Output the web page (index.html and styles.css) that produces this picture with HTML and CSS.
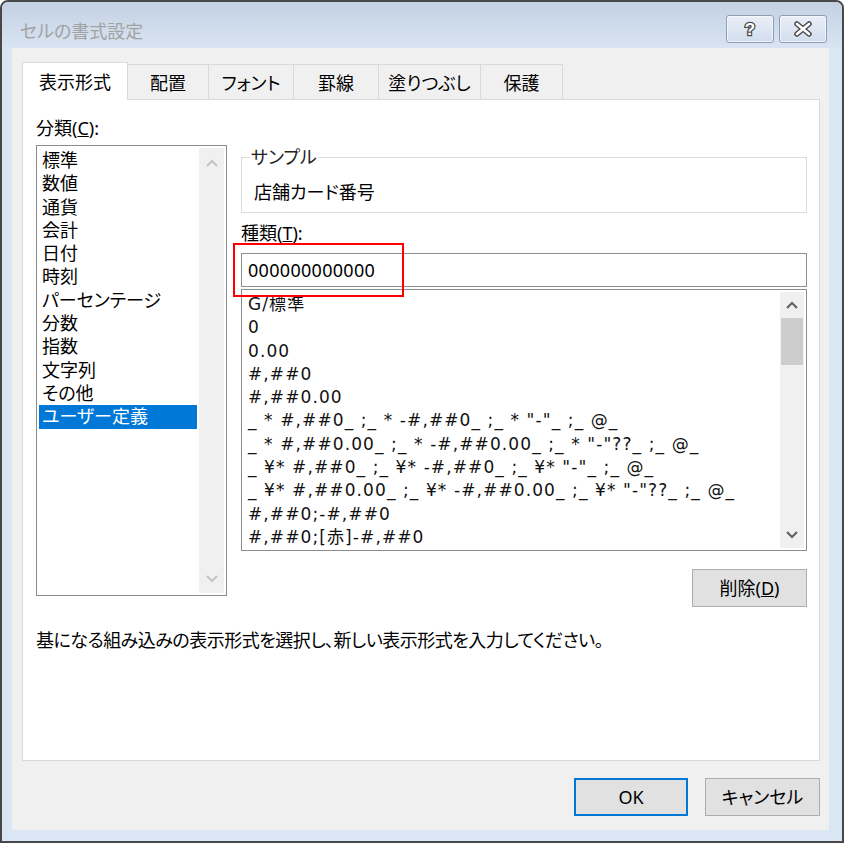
FILE: index.html
```html
<!DOCTYPE html>
<html lang="ja">
<head>
<meta charset="utf-8">
<title>セルの書式設定</title>
<link rel="stylesheet" href="styles.css">
</head>
<body>
<div class="window">
  <div class="titlebar">
    <div class="title">セルの書式設定</div>
    <div class="caption-buttons">
      <div class="cap-btn">
        <svg width="20" height="20" viewBox="0 0 20 20"><text x="10" y="16" text-anchor="middle" font-family="Liberation Sans, sans-serif" font-weight="bold" font-size="17" fill="#fff" stroke="#4a4a4a" stroke-width="2.6" paint-order="stroke">?</text></svg>
      </div>
      <div class="cap-btn">
        <svg width="20" height="16" viewBox="0 0 20 16"><path d="M4 3 L16 13 M16 3 L4 13" stroke="#4a4a4a" stroke-width="5.5" stroke-linecap="round"/><path d="M4 3 L16 13 M16 3 L4 13" stroke="#fff" stroke-width="2.6" stroke-linecap="round"/></svg>
      </div>
    </div>
  </div>
  <div class="client">
    <div class="tabs">
      <div class="tab active tab-w1">表示形式</div>
      <div class="tab tab-w2">配置</div>
      <div class="tab tab-w3">フォント</div>
      <div class="tab tab-w3">罫線</div>
      <div class="tab tab-w4">塗りつぶし</div>
      <div class="tab tab-w5">保護</div>
    </div>
    <div class="panel">
      <div class="panel-main">
        <div class="col-left">
          <div class="label">分類(<u>C</u>):</div>
          <div class="listbox cat-list">
            <div class="items">
              <div class="item">標準</div>
              <div class="item">数値</div>
              <div class="item">通貨</div>
              <div class="item">会計</div>
              <div class="item">日付</div>
              <div class="item">時刻</div>
              <div class="item">パーセンテージ</div>
              <div class="item">分数</div>
              <div class="item">指数</div>
              <div class="item">文字列</div>
              <div class="item">その他</div>
              <div class="item selected">ユーザー定義</div>
            </div>
            <div class="vscroll disabled">
              <div class="arrow arrow-cat"><svg width="12" height="8" viewBox="0 0 12 8"><path d="M1 7 L6 2 L11 7" fill="none" stroke="currentColor" stroke-width="2"/></svg></div>
              <div class="track"></div>
              <div class="arrow arrow-cat"><svg width="12" height="8" viewBox="0 0 12 8"><path d="M1 1 L6 6 L11 1" fill="none" stroke="currentColor" stroke-width="2"/></svg></div>
            </div>
          </div>
        </div>
        <div class="col-right">
          <fieldset class="group">
            <legend>サンプル</legend>
            <div class="sample">店舗カード番号</div>
          </fieldset>
          <div class="label kind-label">種類(<u>T</u>):</div>
          <div class="input-wrap">
            <div class="input">000000000000</div>
            <div class="mark"></div>
          </div>
          <div class="listbox fmt-list">
            <div class="items fmt-items">
              <div class="item">G/標準</div>
              <div class="item">0</div>
              <div class="item">0.00</div>
              <div class="item">#,##0</div>
              <div class="item">#,##0.00</div>
              <div class="item">_ * #,##0_ ;_ * -#,##0_ ;_ * "-"_ ;_ @_</div>
              <div class="item">_ * #,##0.00_ ;_ * -#,##0.00_ ;_ * "-"??_ ;_ @_</div>
              <div class="item">_ ¥* #,##0_ ;_ ¥* -#,##0_ ;_ ¥* "-"_ ;_ @_</div>
              <div class="item">_ ¥* #,##0.00_ ;_ ¥* -#,##0.00_ ;_ ¥* "-"??_ ;_ @_</div>
              <div class="item">#,##0;-#,##0</div>
              <div class="item">#,##0;[赤]-#,##0</div>
            </div>
            <div class="vscroll">
              <div class="arrow"><svg width="12" height="8" viewBox="0 0 12 8"><path d="M1 7 L6 2 L11 7" fill="none" stroke="currentColor" stroke-width="2"/></svg></div>
              <div class="thumb"></div>
              <div class="track"></div>
              <div class="arrow"><svg width="12" height="8" viewBox="0 0 12 8"><path d="M1 1 L6 6 L11 1" fill="none" stroke="currentColor" stroke-width="2"/></svg></div>
            </div>
          </div>
          <div class="btn-row">
            <button class="btn btn-del">削除(<u>D</u>)</button>
          </div>
        </div>
      </div>
      <div class="desc">基になる組み込みの表示形式を選択し、新しい表示形式を入力してください。</div>
    </div>
    <div class="footer">
      <button class="btn btn-ok">OK</button>
      <button class="btn btn-cancel">キャンセル</button>
    </div>
  </div>
</div>
</body>
</html>
```

FILE: styles.css
```css
* { box-sizing: border-box; }

body {
  margin: 0;
  background: #ffffff;
  font-family: "Noto Sans", "Noto Sans CJK JP", sans-serif;
  font-feature-settings: "palt";
  font-size: 18px;
  color: #000;
}

.window {
  width: 844px;
  height: 843px;
  border: 2px solid #474747;
  border-radius: 8px 8px 0 0;
  background: #dae6f4;
  display: flex;
  flex-direction: column;
  overflow: hidden;
}

.titlebar {
  height: 46px;
  flex-shrink: 0;
  display: flex;
  justify-content: space-between;
  align-items: flex-start;
  background: linear-gradient(#c3d1e3, #d9e4f2);
}

.title {
  padding: 17px 0 0 18px;
  line-height: 24px;
  color: #a2a2a2;
}

.caption-buttons {
  display: flex;
  gap: 5px;
  margin: 13px 15px 0 0;
}

.cap-btn {
  width: 48px;
  height: 28px;
  border: 1px solid #8d9db3;
  border-radius: 3px;
  background: linear-gradient(#e9eff7, #d2dded);
  box-shadow: inset 0 0 0 1px rgba(255,255,255,0.6);
  display: flex;
  align-items: center;
  justify-content: center;
}

.client {
  flex: 1;
  margin: 0 13px 11px 10px;
  background: #f0f0f0;
  padding: 14px 9px 14px 10px;
  display: flex;
  flex-direction: column;
}

.tabs {
  height: 37px;
  flex-shrink: 0;
  display: flex;
  align-items: flex-end;
}

.tab {
  height: 35px;
  border: 1px solid #d9d9d9;
  border-bottom: none;
  margin-right: -1px;
  background: #f0f0f0;
  display: flex;
  align-items: center;
  justify-content: center;
  line-height: 24px;
  padding-top: 2px;
}

.tab.active {
  height: 38px;
  margin-bottom: -1px;
  background: #fff;
  position: relative;
  z-index: 1;
  padding-top: 0;
}

.tab-w1 { width: 106px; }
.tab-w2 { width: 82px; }
.tab-w3 { width: 86px; }
.tab-w4 { width: 103px; }
.tab-w5 { width: 83px; }

.panel {
  flex: 1;
  background: #fff;
  border: 1px solid #d9d9d9;
  padding: 16px 13px 0 13px;
}

.panel-main {
  display: grid;
  grid-template-columns: 191px 566px;
  column-gap: 14px;
  align-items: start;
}

.label {
  line-height: 24px;
  margin-bottom: 5px;
}

.listbox {
  border: 1px solid #8c8c8c;
  padding: 2px;
  display: flex;
  background: #fff;
}

.cat-list { height: 451px; }

.items {
  flex: 1;
  padding-top: 1px;
  margin-right: 2px;
  overflow: hidden;
}

.item {
  line-height: 23.3px;
  height: 23.3px;
  padding-left: 3px;
  white-space: nowrap;
}

.item.selected {
  background: #0078d7;
  color: #fff;
}

.vscroll {
  width: 25px;
  background: #f0f0f0;
  display: flex;
  flex-direction: column;
  color: #606060;
}

.vscroll.disabled { color: #c3c3c3; }

.arrow {
  height: 26px;
  display: flex;
  align-items: center;
  justify-content: center;
}

.arrow-cat { height: 29px; }

.track { flex: 1; }

.thumb {
  height: 47px;
  margin: 0 1px;
  background: #cdcdcd;
}

.col-right {
  display: flex;
  flex-direction: column;
  padding-top: 32px;
}

.group {
  margin: 0;
  border: 1px solid #dcdcdc;
  padding: 0 12px 8px 12px;
}

.group legend {
  line-height: 18px;
  padding: 0 1px;
  margin-left: -4px;
  color: #222;
}

.sample {
  line-height: 24px;
  padding-top: 14px;
}

.kind-label {
  margin: 8px 0 8px;
}

.input-wrap {
  position: relative;
}

.input {
  height: 34px;
  border: 1px solid #8f8f8f;
  padding-left: 6px;
  line-height: 32px;
  background: #fff;
  letter-spacing: 0.3px;
}

.mark {
  position: absolute;
  left: -8px;
  top: -10px;
  width: 171px;
  height: 54px;
  border: 2px solid #ff0000;
  pointer-events: none;
}

.fmt-list {
  height: 262px;
  margin-top: 2px;
}

.fmt-list .vscroll { width: 24px; }

.fmt-items .item {
  padding-left: 4px;
  font-family: "DejaVu Sans", "Noto Sans CJK JP", sans-serif;
  font-size: 17px;
  letter-spacing: 1.1px;
  color: #111;
}

.btn-row {
  display: flex;
  justify-content: flex-end;
  margin-top: 18px;
}

.btn {
  font-family: inherit;
  font-size: 18px;
  font-feature-settings: "palt";
  color: #000;
  background: #e1e1e1;
  border: 1px solid #adadad;
  height: 38px;
  padding: 0;
  line-height: 24px;
  margin: 0;
}

.btn-del { width: 115px; }

.desc {
  margin-top: 21px;
  line-height: 24px;
  letter-spacing: -0.5px;
}

.footer {
  display: flex;
  justify-content: flex-end;
  gap: 17px;
  margin-top: 17px;
  flex-shrink: 0;
}

.btn-ok {
  width: 114px;
  border: 2px solid #0078d7;
}

.btn-cancel { width: 115px; }
```
